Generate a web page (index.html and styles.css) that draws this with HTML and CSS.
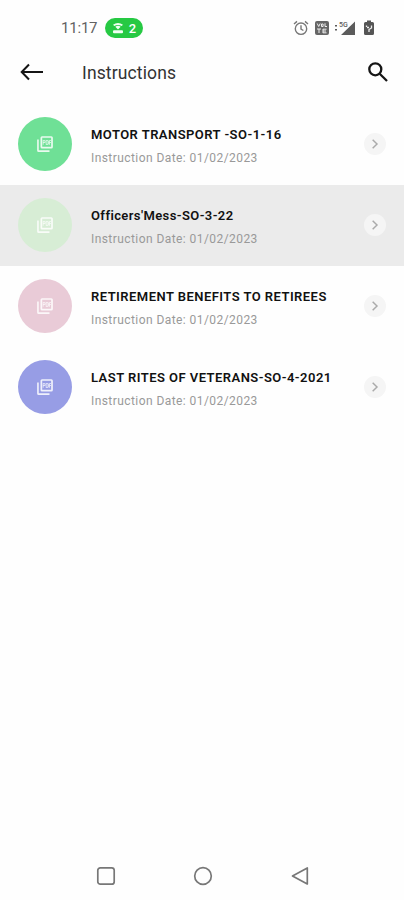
FILE: index.html
```html
<!DOCTYPE html>
<html lang="en">
<head>
<meta charset="utf-8">
<title>Instructions</title>
<link rel="stylesheet" href="styles.css">
</head>
<body>
<svg class="defs" aria-hidden="true">
  <symbol id="pdf" viewBox="0 0 24 24">
    <path d="M8 1.500h12.500a2 2 0 0 1 2 2V16a2 2 0 0 1-2 2H8a2 2 0 0 1-2-2V3.500a2 2 0 0 1 2-2zm.3 2.300v11.900h11.900V3.800zM1.500 6h2.200v14.300H18v2.200H3.500a2 2 0 0 1-2-2z" fill-rule="evenodd"/>
    <path d="M9 7h2.500a1 1 0 0 1 1 1v1.500a1 1 0 0 1-1 1H10V13H9zm1 1v1.500h1.500V8zM13 7h2.500a1.500 1.500 0 0 1 1.500 1.500v3a1.500 1.500 0 0 1-1.500 1.500H13zm1 1v4h1.500V8zM17.500 7H20v1h-1.500v1.500h1.500v1h-1.500V13h-1z" fill-rule="evenodd"/>
  </symbol>
  <symbol id="chevron" viewBox="0 0 24 24"><path d="M8.500 5.500l6.500 6.500-6.500 6.500"/></symbol>
</svg>
<div class="screen">
  <header class="status">
    <span class="time">11:17</span>
    <span class="hotspot">
      <svg viewBox="0 0 12 12" width="12" height="12"><path d="M1 2.700Q6-.7 11 2.700L9.700 4.100Q6 1.700 2.300 4.100zM3.300 4.700Q6 3 8.700 4.700L6 7.500z"/><rect x="1" y="8.300" width="10" height="3" rx="1"/></svg>
      <span>2</span>
    </span>
    <span class="indicators">
      <svg class="line" viewBox="0 0 16 16" width="16" height="16"><circle cx="8" cy="8.700" r="5.700"/><path d="M8 5.300v3.700l2.400 1.500M1 4l3-2.600M15 4l-3-2.600"/></svg>
      <svg class="volte" viewBox="0 0 14 14" width="14" height="14"><rect width="14" height="14" rx="2"/><path d="M2.200 2.500l1.500 3 1.500-3M6.500 3v2.500h1.600V3zM10 2.300v3.200h2M2 8h4M4 8v4M8 8v4M8 8.200h3.500M8 10h3M8 11.800h3.500"/></svg>
      <svg class="signal" viewBox="0 0 22 16" width="22" height="16"><path d="M21 1.500V15H7zM1 5h2v1.500H1zM1 9h2v1.500H1z"/><text x="5" y="6.500">5G</text></svg>
      <svg class="battery" viewBox="0 0 10 16" width="10" height="16"><path d="M3 .5h4V2h1.500A1.500 1.500 0 0 1 10 3.500v10A1.500 1.500 0 0 1 8.500 15h-7A1.500 1.500 0 0 1 0 13.500v-10A1.500 1.500 0 0 1 1.500 2H3z"/><path class="mark" d="M2.500 7V5.500M7.500 5.500V8L5 9.500V12M3 7.500h2"/></svg>
    </span>
  </header>
  <nav class="appbar">
    <svg class="back" viewBox="0 0 24 18" width="24" height="18"><path d="M23 9H2M9 1.500L1.700 9 9 16.500"/></svg>
    <h1>Instructions</h1>
    <svg class="search" viewBox="0 0 22 22" width="22" height="22"><circle cx="8.300" cy="8.300" r="6"/><path d="M12.700 12.700L20 20"/></svg>
  </nav>
  <main>
    <article class="row">
      <span class="avatar green"><svg><use href="#pdf"/></svg></span>
      <div class="text"><h2>MOTOR TRANSPORT -SO-1-16</h2><p>Instruction Date: 01/02/2023</p></div>
      <span class="go"><svg><use href="#chevron"/></svg></span>
    </article>
    <article class="row selected">
      <span class="avatar mint"><svg><use href="#pdf"/></svg></span>
      <div class="text"><h2 class="tight">Officers'Mess-SO-3-22</h2><p>Instruction Date: 01/02/2023</p></div>
      <span class="go"><svg><use href="#chevron"/></svg></span>
    </article>
    <article class="row">
      <span class="avatar pink"><svg><use href="#pdf"/></svg></span>
      <div class="text"><h2>RETIREMENT BENEFITS TO RETIREES</h2><p>Instruction Date: 01/02/2023</p></div>
      <span class="go"><svg><use href="#chevron"/></svg></span>
    </article>
    <article class="row">
      <span class="avatar blue"><svg><use href="#pdf"/></svg></span>
      <div class="text"><h2>LAST RITES OF VETERANS-SO-4-2021</h2><p>Instruction Date: 01/02/2023</p></div>
      <span class="go"><svg><use href="#chevron"/></svg></span>
    </article>
  </main>
  <footer class="sysnav">
    <svg viewBox="0 0 20 20"><rect x="1.800" y="1.800" width="16.400" height="16.400" rx="2.500"/></svg>
    <svg viewBox="0 0 20 20"><circle cx="10" cy="10" r="8.300"/></svg>
    <svg viewBox="0 0 20 20"><path d="M17.300 2v16L2.500 10z"/></svg>
  </footer>
</div>
</body>
</html>
```
FILE: styles.css
```css
* { box-sizing: border-box; }
body { margin: 0; background: #fefefe; font-family: Roboto, "Liberation Sans", sans-serif; }
.defs { position: absolute; width: 0; height: 0; }
svg { display: block; flex: none; }
.screen { width: 404px; height: 900px; display: flex; flex-direction: column; }

.status { height: 45px; padding: 11px 30px 0 61px; display: flex; align-items: center; }
.time { width: 44px; font-size: 15px; letter-spacing: -0.2px; color: #626262; }
.hotspot { width: 38px; height: 20px; border-radius: 10px; background: #26c943; color: #fff; display: flex; align-items: center; justify-content: center; gap: 5px; font-size: 13px; font-weight: 500; }
.hotspot svg { fill: #f2fff3; }
.indicators { margin-left: auto; display: flex; align-items: center; }
.line { fill: none; stroke: #777; stroke-width: 1.4; margin-right: 6px; }
.volte { fill: #666; margin-right: 5px; }
.volte path { fill: none; stroke: #eee; stroke-width: 1; }
.signal { fill: #5b5b5b; margin-right: 8px; }
.signal text { font-size: 7px; font-weight: 500; }
.battery { fill: #555; }
.battery .mark { fill: none; stroke: #eee; stroke-width: 1.3; }

.appbar { height: 59px; padding: 0 15px 5px 20px; display: flex; align-items: center; }
.appbar h1 { margin: 2px auto 0 38px; font-size: 17.5px; line-height: 24px; font-weight: 400; letter-spacing: 0.13px; color: #333; }
.back { fill: none; stroke: #151515; stroke-width: 2; }
.search { fill: none; stroke: #151515; stroke-width: 2.3; }

.row { height: 81px; padding: 0 18px 1px; display: flex; align-items: center; }
.selected { background: #ebebeb; }
.avatar { width: 54px; height: 54px; border-radius: 50%; display: flex; align-items: center; justify-content: center; }
.avatar svg { width: 18px; height: 18px; fill: #fff; opacity: .85; }
.green { background: #6fe096; }
.mint { background: #d7edd5; }
.pink { background: #e9cbd7; }
.blue { background: #979de5; }
.text { margin-left: 19px; padding-top: 4px; flex: 1; white-space: nowrap; }
.text h2 { margin: 0; font-size: 13px; line-height: 20px; font-weight: 600; color: #111; letter-spacing: 0.46px; }
.text h2.tight { letter-spacing: 0.4px; }
.text p { margin: 4px 0 0; font-size: 12px; line-height: 18px; letter-spacing: 0.43px; color: #999; }
.go { width: 22px; height: 22px; border-radius: 50%; background: #f5f5f5; display: flex; align-items: center; justify-content: center; }
.go svg { width: 16px; height: 16px; fill: none; stroke: #aaa; stroke-width: 2.2; }

.sysnav { margin-top: auto; height: 49px; padding: 0 94px 0 96px; display: flex; align-items: center; justify-content: space-between; }
.sysnav svg { width: 20px; height: 20px; fill: none; stroke: #777; stroke-width: 1.7; stroke-linejoin: round; }
```
